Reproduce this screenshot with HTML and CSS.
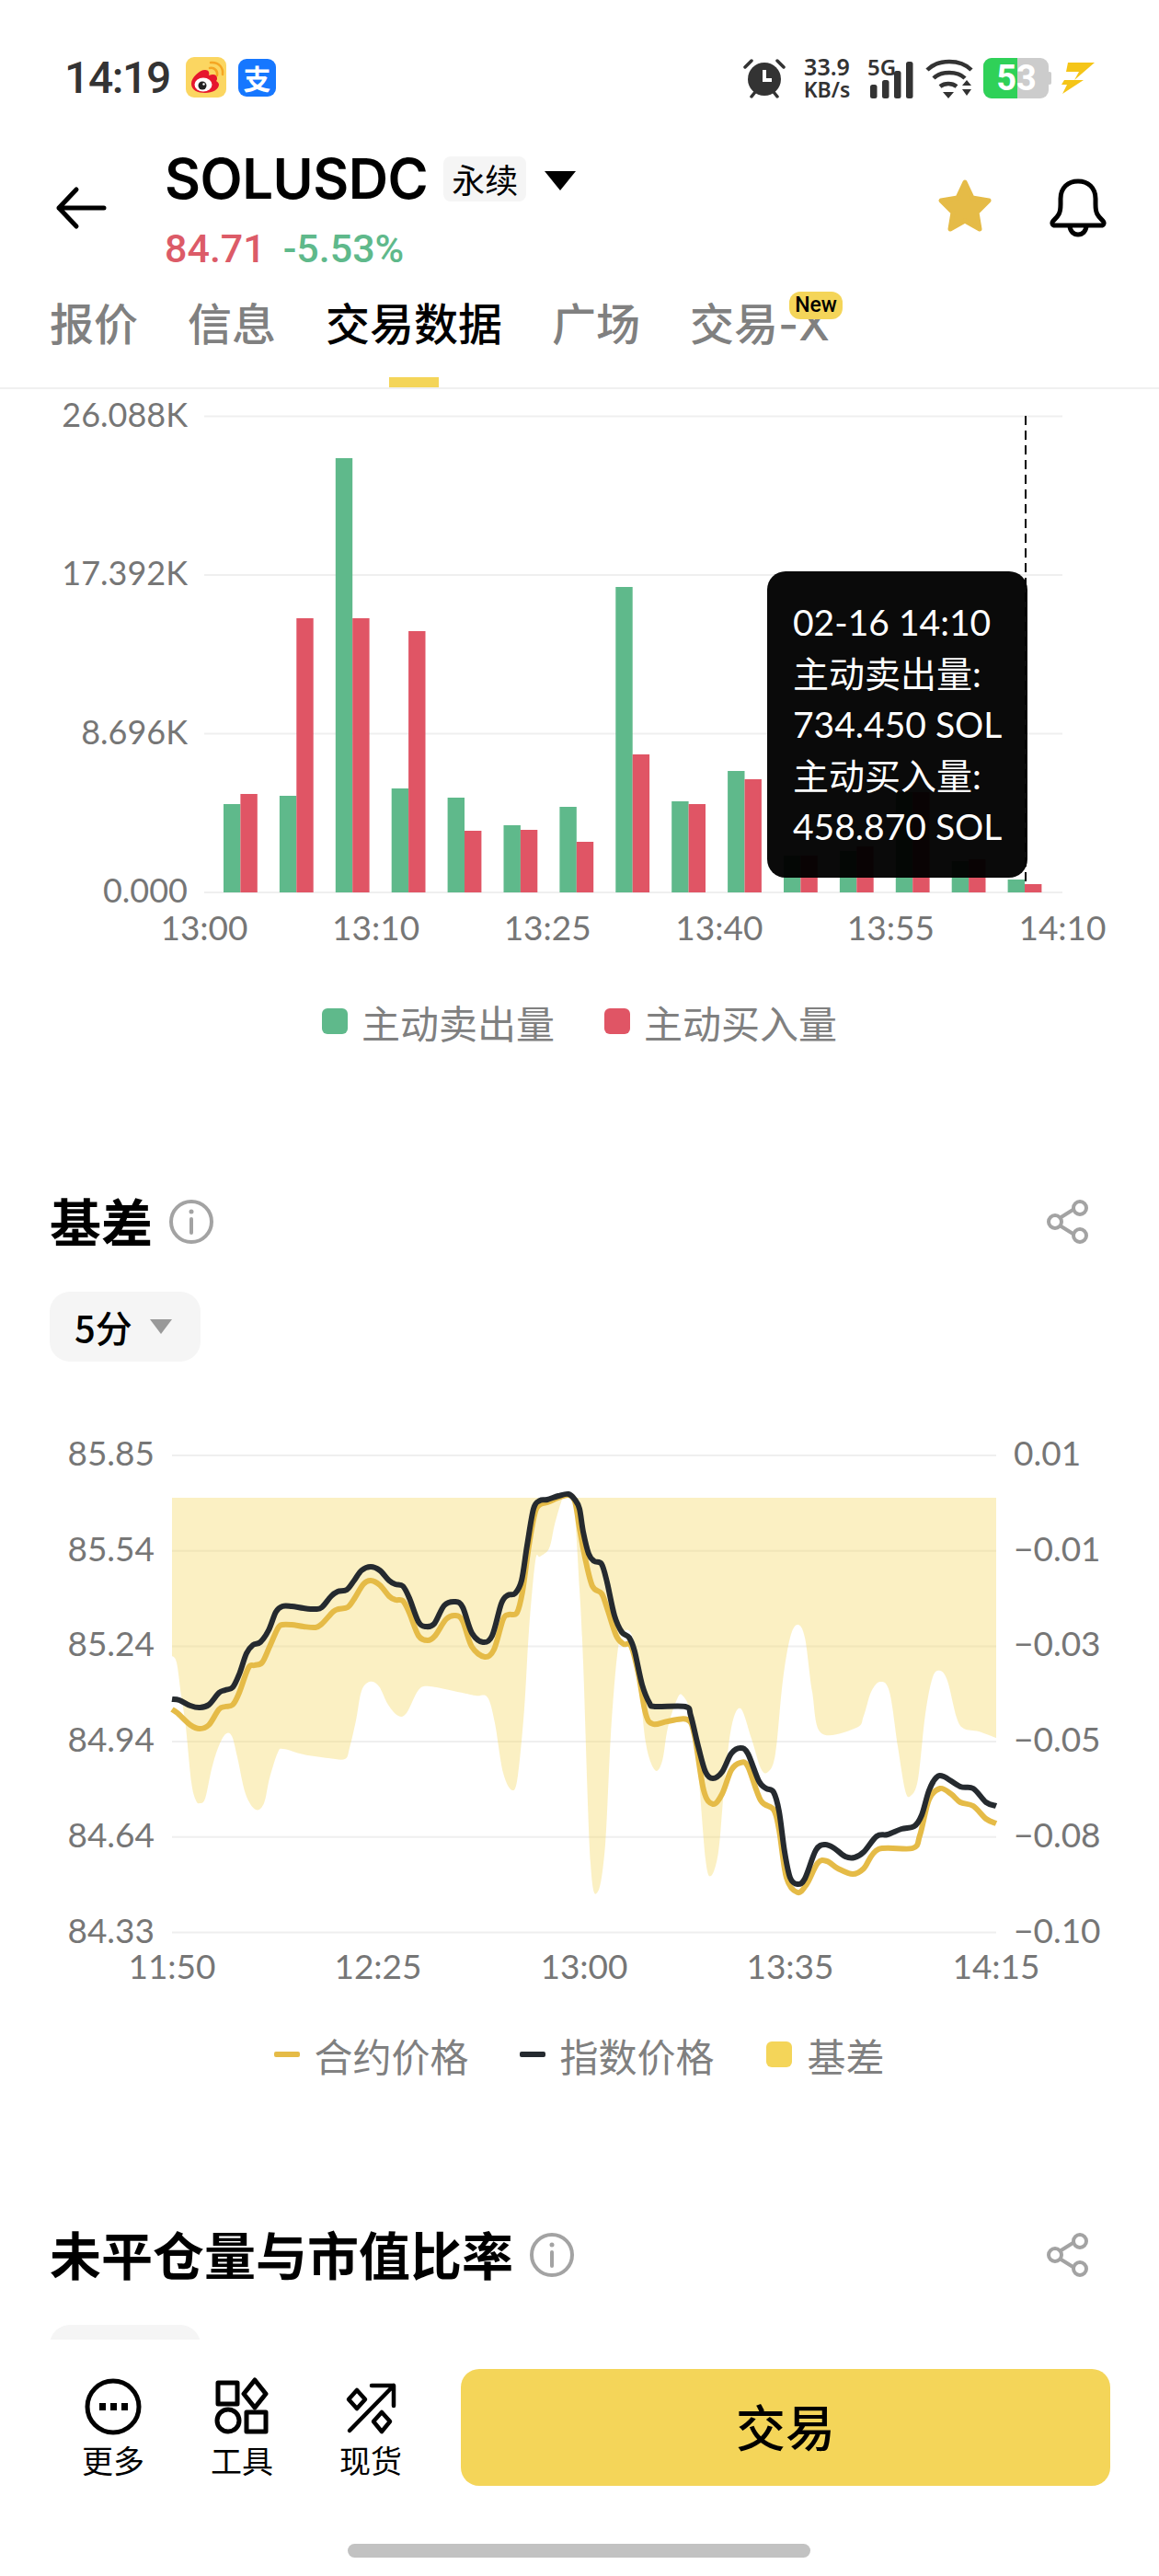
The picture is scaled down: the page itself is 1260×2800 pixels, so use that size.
FILE: index.html
```html
<!DOCTYPE html>
<html lang="zh-CN">
<head>
    <meta charset="UTF-8">
    <meta name="viewport" content="width=device-width, initial-scale=1.0">
    <title>SOLUSDC 交易数据</title>
    <link rel="stylesheet" href="styles.css">
</head>
<body>
<div class="app">
    <div class="status-bar">
        <span class="clock">14:19</span>
        <svg class="app-icon" viewBox="0 0 44 44">
            <rect width="44" height="44" rx="9" fill="#fbd661"/>
            <path d="M6 29c0-7 9-15 15-15 4 0 5 3 4 6 5-2 9-1 9 3 0 1 0 2-1 3 2 1 3 3 3 4 0 5-7 9-15 9S6 36 6 29z" fill="#e6162d"/>
            <ellipse cx="19" cy="30" rx="9.500" ry="7.500" fill="#fff"/>
            <circle cx="18" cy="31" r="4.500" fill="#222"/>
            <circle cx="19.500" cy="29.500" r="1.200" fill="#fff"/>
            <path d="M26 12c5-1 9 3 8 8M27 6c9-1 14 6 13 13" fill="none" stroke="#f5a623" stroke-width="2.500" stroke-linecap="round"/>
        </svg>
        <span class="alipay">支</span>

        <div class="status-right">
            <svg class="alarm" viewBox="0 0 46 44">
                <circle cx="23" cy="23" r="18" fill="#333"/>
                <path d="M23 13v11h8" fill="none" stroke="#fff" stroke-width="4"/>
                <path d="M2 10l7-7M44 10l-7-7M9 42l4-5M37 42l-4-5" stroke="#333" stroke-width="3.500" stroke-linecap="round"/>
            </svg>
            <div class="speed"><span>33.9</span><span>KB/s</span></div>
            <div class="signal">
                <span class="signal-text">5G</span>
                <svg viewBox="0 0 50 44">
                    <rect x="3" y="29" width="7.500" height="15" rx="2.500"/>
                    <rect x="16" y="24" width="7.500" height="20" rx="2.500"/>
                    <rect x="29" y="14" width="7.500" height="30" rx="2.500"/>
                    <rect x="42" y="4" width="7.500" height="40" rx="2.500"/>
                </svg>
            </div>
            <svg class="wifi" viewBox="0 0 52 44">
                <path d="M2 13C14 1 38 1 50 13M9 22c8-8 26-8 34 0M16 31c5-4 13-4 18 0" fill="none" stroke="#333" stroke-width="4.500"/>
                <path d="M19 37h12l-6 7zM40 30l5-6 5 6zM40 34h10l-5 7z" fill="#333"/>
            </svg>
            <div class="battery">
                <span class="battery-level"></span>
                <span class="battery-text">53</span>
            </div>
            <svg class="bolt" viewBox="0 0 36 36">
                <path d="M7 1h29L14 20l5-9H5zM3 20h21L1 35l5-10H0z" fill="#f5c518"/>
            </svg>
        </div>
    </div>

    <div class="top-bar">
        <svg class="back" viewBox="0 0 60 60">
            <path d="M55 30H6M25 10L6 30l19 20" fill="none" stroke="#000" stroke-width="5" stroke-linecap="round" stroke-linejoin="round"/>
        </svg>
        <div class="title-block">
            <div class="title-row">
                <span class="symbol">SOLUSDC</span>
                <span class="tag">永续</span>
                <span class="caret"></span>
            </div>
            <div class="price-row">
                <span class="red">84.71</span>
                <span class="green">-5.53%</span>
            </div>
        </div>
        <svg class="star" viewBox="0 0 64 64">
            <path d="M32 6l8 17 18 3-13 13 3 18-16-9-16 9 3-18L6 26l18-3z" fill="#e5bb47" stroke="#e5bb47" stroke-width="5" stroke-linejoin="round"/>
        </svg>
        <svg class="bell" viewBox="0 0 64 64">
            <path d="M7 51c-3 0-4-3-2-5 5-5 8-7 8-18v-6C13 10 21 3 32 3s19 7 19 19v6c0 11 3 13 8 18 2 2 1 5-2 5zM23 51c0 6 4 10 9 10s9-4 9-10" fill="none" stroke="#000" stroke-width="5" stroke-linejoin="round"/>
        </svg>
    </div>

    <div class="tabs">
        <div class="tab">报价</div>
        <div class="tab">信息</div>
        <div class="tab active">交易数据</div>
        <div class="tab">广场</div>
        <div class="tab">交易-X<span class="new-badge">New</span></div>
    </div>

    <div class="scroll-area">
        <div class="chart-wrap">
            <svg id="volume-chart" class="chart-volume" viewBox="0 423 1260 662"></svg>
            <div class="chart-tooltip">
                <div>02-16 14:10</div>
                <div>主动卖出量:</div>
                <div>734.450 SOL</div>
                <div>主动买入量:</div>
                <div>458.870 SOL</div>
            </div>
        </div>
        <div class="legend legend-volume">
            <span class="legend-item"><i class="swatch swatch-green"></i>主动卖出量</span>
            <span class="legend-item"><i class="swatch swatch-red"></i>主动买入量</span>
        </div>

        <div class="section-head first">
            <h2>基差</h2>
            <svg class="info" viewBox="0 0 48 48">
                <circle cx="24" cy="24" r="22" fill="none" stroke="#a3a3a3" stroke-width="4"/>
                <circle cx="24" cy="13" r="2.500" fill="#a3a3a3"/>
                <path d="M24 21v15" stroke="#a3a3a3" stroke-width="4" stroke-linecap="round"/>
            </svg>
            <svg class="share" viewBox="0 0 48 48">
                <path d="M14 20l16-10M14 28l16 10" stroke="#a3a3a3" stroke-width="4"/>
                <circle cx="9" cy="24" r="7" fill="none" stroke="#a3a3a3" stroke-width="4"/>
                <circle cx="36" cy="9" r="7" fill="none" stroke="#a3a3a3" stroke-width="4"/>
                <circle cx="36" cy="39" r="7" fill="none" stroke="#a3a3a3" stroke-width="4"/>
            </svg>
        </div>
        <div class="pill"><span>5分</span><i class="pill-caret"></i></div>

        <svg id="basis-chart" class="chart-basis" viewBox="0 1540 1260 640"></svg>
        <div class="legend legend-basis">
            <span class="legend-item"><i class="dash dash-gold"></i>合约价格</span>
            <span class="legend-item"><i class="dash dash-dark"></i>指数价格</span>
            <span class="legend-item"><i class="swatch swatch-yellow"></i>基差</span>
        </div>

        <div class="section-head second">
            <h2>未平仓量与市值比率</h2>
            <svg class="info" viewBox="0 0 48 48">
                <circle cx="24" cy="24" r="22" fill="none" stroke="#a3a3a3" stroke-width="4"/>
                <circle cx="24" cy="13" r="2.500" fill="#a3a3a3"/>
                <path d="M24 21v15" stroke="#a3a3a3" stroke-width="4" stroke-linecap="round"/>
            </svg>
            <svg class="share" viewBox="0 0 48 48">
                <path d="M14 20l16-10M14 28l16 10" stroke="#a3a3a3" stroke-width="4"/>
                <circle cx="9" cy="24" r="7" fill="none" stroke="#a3a3a3" stroke-width="4"/>
                <circle cx="36" cy="9" r="7" fill="none" stroke="#a3a3a3" stroke-width="4"/>
                <circle cx="36" cy="39" r="7" fill="none" stroke="#a3a3a3" stroke-width="4"/>
            </svg>
        </div>
        <div class="pill"></div>
    </div>

    <div class="bottom-bar">
        <div class="bottom-row">
            <div class="tool">
                <svg viewBox="0 0 64 64">
                    <circle cx="32" cy="32" r="28" fill="none" stroke="#000" stroke-width="5"/>
                    <path d="M17 28h7v8h-7zM29 28h7v8h-7zM41 28h7v8h-7z"/>
                </svg>
                <span>更多</span>
            </div>
            <div class="tool">
                <svg viewBox="0 0 64 64">
                    <g fill="none" stroke="#000" stroke-width="5" stroke-linejoin="round">
                        <rect x="6" y="6" width="21" height="23"/>
                        <path d="M46 3l12 15-12 15-12-15z"/>
                        <circle cx="17" cy="47" r="12"/>
                        <rect x="37" y="38" width="21" height="21"/>
                    </g>
                </svg>
                <span>工具</span>
            </div>
            <div class="tool">
                <svg viewBox="0 0 64 64">
                    <g fill="none" stroke="#000" stroke-width="4.500" stroke-linecap="round" stroke-linejoin="round">
                        <path d="M9 58L57 9M33 9h24v22"/>
                        <path d="M17 14l9 10-9 10-9-10z"/>
                        <path d="M44 38l9 10-9 11-9-11z"/>
                    </g>
                </svg>
                <span>现货</span>
            </div>
            <div class="trade-btn">交易</div>
        </div>
        <div class="home-bar"></div>
    </div>
</div>
<script src="chart.js"></script>
</body>
</html>
```

FILE: styles.css
```css
* { box-sizing: border-box; }

body {
    margin: 0;
    background: #fff;
    font-family: "Noto Sans CJK SC", "Noto Sans", sans-serif;
}

.app {
    width: 1260px;
    height: 2800px;
    display: flex;
    flex-direction: column;
    overflow: hidden;
    position: relative;
}

/* status bar */
.status-bar {
    height: 168px;
    flex: none;
    display: flex;
    align-items: center;
    padding-left: 70px;
    color: #333;
}
.clock {
    font-family: Roboto, sans-serif;
    font-weight: 500;
    font-size: 48px;
    letter-spacing: -1.4px;
    width: 132px;
}
.app-icon { width: 44px; height: 44px; }
.alipay {
    width: 41px;
    height: 41px;
    margin-left: 13px;
    border-radius: 9px;
    background: #1677ff;
    color: #fff;
    font-size: 30px;
    font-weight: 700;
    line-height: 40px;
    text-align: center;
}
.status-right {
    position: absolute;
    top: 63px;
    left: 808px;
    width: 384px;
    height: 44px;
    display: flex;
    align-items: center;
}
.alarm { width: 46px; height: 44px; fill: #333; }
.speed {
    margin-left: 18px;
    width: 54px;
    display: flex;
    flex-direction: column;
    font-family: "Noto Sans", sans-serif;
    font-weight: 600;
    font-size: 25px;
    line-height: 25px;
    text-align: center;
    white-space: nowrap;
}
.speed span:last-child { font-size: 23px; }
.signal {
    position: relative;
    margin-left: 17px;
    width: 50px;
    height: 44px;
}
.signal svg { display: block; width: 50px; height: 44px; fill: #333; }
.signal-text {
    position: absolute;
    left: 0;
    top: 0;
    font-family: "Noto Sans", sans-serif;
    font-size: 24px;
    font-weight: 600;
    line-height: 20px;
}
.wifi { margin-left: 13px; width: 52px; height: 44px; }
.battery {
    position: relative;
    margin-left: 11px;
    width: 71px;
    height: 44px;
    border-radius: 9px;
    background: #ccc;
}
.battery::after {
    content: "";
    position: absolute;
    left: 70px;
    top: 15px;
    width: 4px;
    height: 14px;
    border-radius: 2px;
    background: #ccc;
}
.battery-level {
    position: absolute;
    left: 0;
    top: 0;
    width: 37px;
    height: 44px;
    border-radius: 9px 0 0 9px;
    background: #2fd158;
}
.battery-text {
    position: absolute;
    left: 0;
    top: 0;
    width: 72px;
    font-family: Roboto, sans-serif;
    font-size: 38px;
    font-weight: 700;
    line-height: 44px;
    text-align: center;
    color: #fff;
}
.bolt { margin-left: 14px; width: 36px; height: 36px; }

/* header */
.top-bar {
    height: 132px;
    flex: none;
    display: flex;
    align-items: flex-start;
    padding: 0 56px 0 58px;
}
.back { width: 60px; height: 60px; margin-top: 28px; }
.title-block { margin-left: 61px; }
.title-row { display: flex; align-items: center; height: 52px; }
.symbol {
    font-family: Inter, sans-serif;
    font-weight: 600;
    font-size: 60px;
    line-height: 52px;
    letter-spacing: -0.5px;
    color: #000;
}
.tag {
    margin-left: 17px;
    width: 90px;
    height: 49px;
    background: #f5f5f5;
    border-radius: 8px;
    font-size: 36px;
    line-height: 49px;
    text-align: center;
}
.caret {
    margin-left: 20px;
    margin-top: 4px;
    width: 0;
    height: 0;
    border-left: 17px solid transparent;
    border-right: 17px solid transparent;
    border-top: 21px solid #000;
}
.price-row {
    margin-top: 30px;
    display: flex;
    gap: 19px;
    font-family: Roboto, sans-serif;
    font-weight: 500;
    font-size: 43px;
    line-height: 40px;
}
.red { color: #dc5b68; }
.green { color: #5fb98b; }
.star { width: 64px; height: 64px; margin: 24px 0 0 auto; }
.bell { width: 64px; height: 64px; margin: 26px 0 0 59px; }

/* tabs */
.tabs {
    height: 123px;
    flex: none;
    display: flex;
    gap: 54px;
    padding: 25px 0 0 54px;
    border-bottom: 2px solid #f0f0f0;
}
.tab {
    position: relative;
    height: 96px;
    font-family: Inter, "Noto Sans CJK SC", sans-serif;
    font-size: 48px;
    font-weight: 500;
    line-height: 56px;
    color: #808080;
    white-space: nowrap;
}
.tab.active { color: #000; }
.tab.active::after {
    content: "";
    position: absolute;
    bottom: 0;
    left: 50%;
    width: 54px;
    height: 11px;
    margin-left: -27px;
    background: #f4d559;
}
.new-badge {
    position: absolute;
    left: 108px;
    top: -8px;
    width: 58px;
    height: 30px;
    border-radius: 12px;
    background: #f4d559;
    color: #000;
    font-family: Roboto, sans-serif;
    font-size: 23px;
    font-weight: 500;
    line-height: 30px;
    text-align: center;
}

/* scrolled content */
.scroll-area {
    flex: 1;
    overflow: hidden;
    min-height: 0;
}
.chart-wrap { position: relative; }
.chart-wrap svg, .chart-basis { display: block; }
.chart-volume { width: 1260px; height: 662px; }
.chart-basis { width: 1260px; height: 640px; margin-top: 60px; }

.axis {
    font-family: Lato, sans-serif;
    font-size: 37px;
    fill: #767676;
}
.axis-small { font-size: 36px; }
.axis-end { text-anchor: end; }
.axis-mid { text-anchor: middle; }

.chart-tooltip {
    position: absolute;
    left: 834px;
    top: 198px;
    width: 283px;
    height: 333px;
    padding: 28px 0 0 28px;
    border-radius: 20px;
    background: rgba(0, 0, 0, 0.96);
    color: #fff;
    font-family: Lato, "Noto Sans CJK SC", sans-serif;
    font-size: 39px;
    line-height: 55.6px;
    white-space: nowrap;
}

.legend {
    height: 56px;
    display: flex;
    justify-content: center;
    align-items: center;
    gap: 56px;
    font-size: 42px;
    color: #808080;
}
.legend-item { display: flex; align-items: center; }
.swatch {
    width: 28px;
    height: 28px;
    margin-right: 17px;
    border-radius: 6px;
}
.swatch-green { background: #5fb98b; }
.swatch-red { background: #e05565; }
.swatch-yellow { background: #f4d559; }
.dash { width: 28px; height: 6px; margin-right: 15px; border-radius: 2px; }
.dash-gold { background: #e5bb47; }
.dash-dark { background: #252a2f; }
.legend-volume { margin-top: -3px; gap: 54px; }
.legend-volume .swatch { margin-right: 15px; }
.legend-basis { margin-top: 25px; }

.section-head {
    height: 60px;
    display: flex;
    align-items: center;
    padding: 0 74px 0 54px;
}
.section-head.first { margin-top: 158px; }
.section-head.second { margin-top: 158px; }
.section-head h2 {
    margin: 0;
    font-size: 56px;
    font-weight: 700;
    line-height: 60px;
    color: #000;
}
.info { width: 48px; height: 48px; margin: 3px 0 0 18px; }
.share { width: 48px; height: 48px; margin: 3px 0 0 auto; }

.pill {
    width: 164px;
    height: 76px;
    margin: 48px 0 0 54px;
    padding-left: 27px;
    display: flex;
    align-items: center;
    background: #f5f5f5;
    border-radius: 22px;
    font-size: 40px;
    font-weight: 500;
    color: #000;
}
.pill-caret {
    margin-left: 19px;
    width: 0;
    height: 0;
    border-left: 12px solid transparent;
    border-right: 12px solid transparent;
    border-top: 16px solid #999;
}

/* bottom bar */
.bottom-bar {
    height: 257px;
    flex: none;
    background: #fff;
    padding-top: 32px;
}
.bottom-row {
    display: flex;
    padding-left: 53px;
    height: 127px;
}
.tool {
    width: 140px;
    padding-top: 9px;
    display: flex;
    flex-direction: column;
    align-items: center;
}
.tool svg { width: 64px; height: 64px; }
.tool span {
    margin-top: 6px;
    font-size: 34px;
    line-height: 40px;
    color: #000;
}
.trade-btn {
    margin-left: 28px;
    width: 706px;
    height: 127px;
    background: #f4d559;
    border-radius: 20px;
    font-size: 54px;
    font-weight: 500;
    line-height: 124px;
    text-align: center;
    color: #000;
}
.home-bar {
    width: 503px;
    height: 15px;
    margin: 63px 0 0 378px;
    border-radius: 8px;
    background: #c2c2c2;
}
```

FILE: chart.js
```js
// both charts use page coordinates, see the viewBox on each svg
function smooth(pts) {
    var d = 'M' + pts[0][0] + ' ' + pts[0][1];
    for (var i = 0; i < pts.length - 1; i++) {
        var p0 = pts[i - 1] || pts[i], p1 = pts[i], p2 = pts[i + 1], p3 = pts[i + 2] || p2;
        d += 'C' + (p1[0] + (p2[0] - p0[0]) / 6).toFixed(1) + ' ' + (p1[1] + (p2[1] - p0[1]) / 6).toFixed(1) +
            ' ' + (p2[0] - (p3[0] - p1[0]) / 6).toFixed(1) + ' ' + (p2[1] - (p3[1] - p1[1]) / 6).toFixed(1) +
            ' ' + p2[0] + ' ' + p2[1];
    }
    return d;
}

function text(x, y, str, cls) {
    return '<text x="' + x + '" y="' + y + '" class="axis ' + cls + '">' + str + '</text>';
}

function hline(x1, x2, y) {
    return '<path d="M' + x1 + ' ' + y + 'H' + x2 + '" stroke="#efefef" stroke-width="2"/>';
}

// volume chart
var tops = [
    [874, 863], [865, 672], [498, 672], [857, 686], [867, 903],
    [897, 902], [877, 915], [638, 820], [871, 874], [838, 847],
    [930, 930], [925, 920], [861, 861], [936, 934], [956, 961]
];
var html = '';
[['26.088K', 452.5], ['17.392K', 625], ['8.696K', 797.5], ['0.000', 970]].forEach(function (t) {
    html += hline(222, 1155, t[1]);
    html += text(204, t[1] + 11, t[0], 'axis-end axis-small');
});
['13:00', '13:10', '13:25', '13:40', '13:55', '14:10'].forEach(function (t, i) {
    html += text(222 + i * 186.6, 1022, t, 'axis-mid');
});
tops.forEach(function (t, i) {
    var x = 243 + i * 60.9;
    html += '<rect x="' + x + '" y="' + t[0] + '" width="18.4" height="' + (970 - t[0]) + '" fill="#5fb98b"/>';
    html += '<rect x="' + (x + 18.4) + '" y="' + t[1] + '" width="18.4" height="' + (970 - t[1]) + '" fill="#e05565"/>';
});
html += '<path d="M1115 452V962" stroke="#000" stroke-width="2" stroke-dasharray="10 6"/>';
document.getElementById('volume-chart').innerHTML = html;

// basis chart
var edge = [
    [187, 1800], [192, 1807], [197, 1843], [202, 1877], [208, 1937], [213, 1957], [217, 1960], [223, 1955],
    [230, 1923], [237, 1900], [245, 1885], [252, 1887], [258, 1910], [267, 1950], [278, 1967], [287, 1960],
    [293, 1933], [302, 1905], [308, 1901], [330, 1907], [357, 1911], [375, 1912], [380, 1900], [387, 1870],
    [393, 1838], [402, 1828], [412, 1833], [422, 1853], [433, 1865], [442, 1862], [455, 1837], [467, 1833],
    [493, 1838], [517, 1843], [530, 1845], [538, 1873], [547, 1927], [557, 1946], [563, 1930], [570, 1857],
    [575, 1773], [582, 1697], [587, 1692], [597, 1683], [603, 1657], [610, 1633], [613, 1628], [623, 1628],
    [630, 1727], [634, 1807], [642, 2025], [650, 2056], [658, 2005], [664, 1886], [672, 1791], [680, 1772],
    [688, 1780], [694, 1815], [702, 1894], [712, 1924], [720, 1914], [726, 1878], [736, 1847], [742, 1843],
    [751, 1863], [759, 1926], [767, 2021], [773, 2039], [781, 2013], [787, 1946], [795, 1878], [805, 1857],
    [817, 1890], [827, 1922], [835, 1926], [843, 1906], [851, 1827], [859, 1780], [867, 1766], [875, 1780],
    [883, 1839], [893, 1884], [931, 1878], [939, 1865], [947, 1839], [957, 1828], [967, 1839], [976, 1898],
    [984, 1946], [990, 1952], [998, 1934], [1006, 1863], [1014, 1823], [1022, 1816], [1030, 1827], [1040, 1867],
    [1048, 1879], [1064, 1882], [1083, 1889]
];
var gold = [
    [187, 1858], [193, 1862], [207, 1875], [217, 1879], [227, 1875], [238, 1858], [245, 1855], [253, 1853],
    [260, 1840], [270, 1813], [277, 1810], [285, 1807], [293, 1790], [302, 1770], [307, 1766], [317, 1766],
    [330, 1768], [343, 1769], [350, 1765], [362, 1752], [368, 1749], [378, 1747], [385, 1738], [395, 1722],
    [403, 1718], [413, 1723], [423, 1735], [430, 1739], [438, 1740], [445, 1753], [455, 1778], [465, 1783],
    [473, 1778], [485, 1760], [495, 1756], [503, 1762], [513, 1790], [527, 1801], [537, 1793], [547, 1760],
    [553, 1755], [562, 1753], [568, 1730], [575, 1680], [582, 1643], [588, 1635], [595, 1633], [607, 1628],
    [618, 1625], [625, 1632], [630, 1661], [636, 1693], [644, 1724], [654, 1732], [660, 1748], [670, 1778],
    [678, 1787], [686, 1789], [694, 1819], [702, 1863], [710, 1874], [726, 1871], [747, 1869], [755, 1886],
    [765, 1946], [775, 1961], [785, 1950], [795, 1924], [805, 1916], [813, 1920], [827, 1957], [841, 1967],
    [847, 1989], [855, 2041], [867, 2057], [877, 2048], [889, 2025], [899, 2023], [911, 2031], [927, 2037],
    [939, 2031], [955, 2010], [992, 2009], [1000, 1995], [1010, 1956], [1022, 1944], [1034, 1950], [1044, 1959],
    [1058, 1963], [1072, 1977], [1083, 1982]
];
var dark = [
    [187, 1847], [195, 1848], [207, 1854], [217, 1856], [227, 1853], [238, 1840], [245, 1837], [253, 1834],
    [260, 1820], [268, 1797], [275, 1788], [283, 1785], [292, 1772], [300, 1752], [307, 1746], [317, 1746],
    [330, 1748], [343, 1749], [350, 1747], [360, 1735], [367, 1730], [377, 1728], [385, 1718], [393, 1707],
    [403, 1703], [413, 1707], [423, 1718], [430, 1722], [438, 1724], [445, 1737], [455, 1763], [463, 1768],
    [472, 1765], [483, 1745], [495, 1741], [503, 1747], [513, 1775], [525, 1785], [535, 1778], [545, 1743],
    [552, 1734], [560, 1732], [567, 1718], [573, 1680], [580, 1640], [587, 1631], [595, 1630], [607, 1626],
    [618, 1624], [625, 1630], [630, 1640], [634, 1665], [640, 1689], [646, 1697], [654, 1700], [660, 1720],
    [668, 1756], [676, 1774], [684, 1780], [690, 1795], [698, 1831], [706, 1851], [712, 1855], [745, 1855],
    [751, 1865], [759, 1898], [767, 1926], [775, 1933], [785, 1926], [795, 1906], [805, 1900], [813, 1906],
    [825, 1936], [833, 1944], [841, 1948], [847, 1969], [853, 2013], [859, 2041], [867, 2048], [875, 2042],
    [887, 2011], [897, 2005], [907, 2009], [919, 2018], [929, 2019], [939, 2013], [953, 1996], [965, 1994],
    [980, 1988], [994, 1985], [1002, 1973], [1010, 1946], [1018, 1932], [1026, 1931], [1044, 1942], [1058, 1944],
    [1072, 1959], [1083, 1963]
];

html = '<clipPath id="plot"><rect x="187" y="1628" width="896" height="480"/></clipPath>';
var left = ['85.85', '85.54', '85.24', '84.94', '84.64', '84.33'];
var right = ['0.01', '−0.01', '−0.03', '−0.05', '−0.08', '−0.10'];
left.forEach(function (t, i) {
    var y = 1582 + i * 103.7;
    html += hline(187, 1083, y);
    html += text(168, y + 11, t, 'axis-end');
    html += text(1102, y + 11, right[i], '');
});
['11:50', '12:25', '13:00', '13:35', '14:15'].forEach(function (t, i) {
    html += text(187 + i * 224, 2151, t, 'axis-mid');
});
html += '<path clip-path="url(#plot)" d="' + smooth(edge) + 'L1083 1628L187 1628Z" fill="#f4d559" fill-opacity="0.36"/>';
html += '<path d="' + smooth(gold) + '" fill="none" stroke="#e5bb47" stroke-width="6"/>';
html += '<path d="' + smooth(dark) + '" fill="none" stroke="#252a2f" stroke-width="6"/>';
document.getElementById('basis-chart').innerHTML = html;
```
